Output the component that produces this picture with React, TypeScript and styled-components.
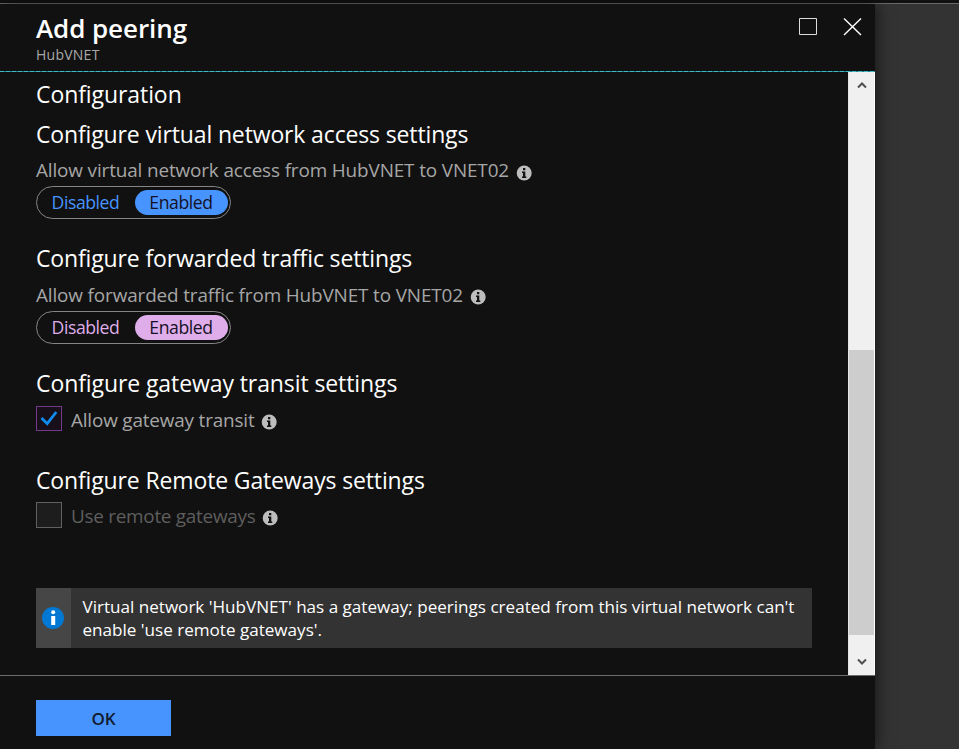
import React from 'react';
import styled, { createGlobalStyle } from 'styled-components';

const GlobalStyle = createGlobalStyle`
  *, *::before, *::after { box-sizing: border-box; }
  body { margin: 0; background: #333; font-family: 'Open Sans', 'Noto Sans', sans-serif; }
  h1, h2, p { margin: 0; font-weight: 400; }
  button { font-family: inherit; border: 0; padding: 0; background: none; }
`;

const Page = styled.div`
  display: flex;
  flex-direction: column;
  height: 749px;
  overflow: hidden;
  background: #333;
`;
const TopStrip = styled.div`
  flex: none;
  height: 4px;
  background: #111;
  border-bottom: 1px solid #6a6a6a;
`;
const Blade = styled.main`
  flex: 1;
  min-height: 0;
  width: 875px;
  display: flex;
  flex-direction: column;
  background: #111;
  color: #fff;
  box-shadow: 2px 0 14px rgba(0, 0, 0, 0.55);
`;
const Header = styled.header`
  flex: none;
  height: 67px;
  padding: 7px 13px 0 36px;
  display: flex;
  justify-content: space-between;
`;
const Title = styled.h1`
  font-size: 26px;
  font-weight: 600;
  line-height: 34px;
  letter-spacing: -0.08px;
`;
const Subtitle = styled.p`
  font-size: 14px;
  line-height: 20px;
  letter-spacing: 0.25px;
  color: #a9a9a9;
`;
const WindowButtons = styled.div`
  display: flex;
  align-items: flex-start;
  gap: 25px;
  padding-top: 6px;
`;
const IconButton = styled.button`
  display: flex;
  width: 20px;
  height: 20px;
`;
const Divider = styled.div`
  flex: none;
  height: 1px;
  background-color: #267f8c;
  background-image: repeating-linear-gradient(90deg, #3fb9c4 0, #3fb9c4 4px, #267f8c 4px, #267f8c 6px);
`;
const Body = styled.div`
  flex: none;
  height: 603px;
  display: flex;
`;
const Content = styled.div`
  width: 848px;
  padding: 4px 36px 0 36px;
`;
const Heading = styled.h2<{ $tracking?: number }>`
  font-size: 23px;
  line-height: 36px;
  letter-spacing: ${({ $tracking = -0.14 }) => $tracking}px;
  white-space: nowrap;
`;
const Section = styled.section<{ $height: number }>`
  height: ${({ $height }) => $height}px;
`;
const LabelRow = styled.div<{ $height?: number }>`
  display: flex;
  align-items: center;
  height: ${({ $height = 34 }) => $height}px;
`;
const Label = styled.span<{ $muted?: boolean; $tracking?: number; $drop?: number }>`
  font-size: 18.9px;
  line-height: 28px;
  padding-top: ${({ $drop = 2 }) => $drop}px;
  letter-spacing: ${({ $tracking = -0.13 }) => $tracking}px;
  color: ${({ $muted }) => ($muted ? '#5e5e5e' : '#a6a6a6')};
  white-space: nowrap;
`;
const InfoSvg = styled.svg`
  flex: none;
  margin: 7px 0 0 7px;
`;
const Switch = styled.div<{ $accent: string }>`
  width: 195px;
  height: 33px;
  padding: 3px 2px 3px 0;
  display: flex;
  border: 1px solid #858585;
  border-radius: 17px;
  color: ${({ $accent }) => $accent};
`;
const Option = styled.button<{ $fill?: string }>`
  height: 25px;
  width: ${({ $fill }) => ($fill ? '93px' : '98px')};
  padding-right: 1px;
  color: ${({ $fill }) => ($fill ? '#151126' : 'inherit')};
  background: ${({ $fill }) => $fill || 'transparent'};
  border-radius: 13px;
  font-size: 17.6px;
  line-height: 25px;
  letter-spacing: -0.42px;
`;
const Checkbox = styled.span<{ $checked?: boolean }>`
  flex: none;
  display: flex;
  width: 26px;
  height: ${({ $checked }) => ($checked ? 25 : 26)}px;
  margin-top: ${({ $checked }) => ($checked ? 1 : 0)}px;
  margin-right: 9px;
  border: 1px solid ${({ $checked }) => ($checked ? '#74398a' : '#606060')};
  background: ${({ $checked }) => ($checked ? '#17101b' : '#1d1d1d')};
`;
const Notice = styled.div`
  width: 776px;
  height: 60px;
  display: flex;
  background: #333;
`;
const NoticeIcon = styled.div`
  width: 35px;
  display: flex;
  align-items: center;
  padding-left: 5px;
  background: #464646;
`;
const NoticeText = styled.p`
  flex: 1;
  padding: 7px 0 0 11.5px;
  font-size: 17.1px;
  line-height: 23px;
  letter-spacing: -0.01px;
  white-space: nowrap;
`;
const Scrollbar = styled.div`
  width: 27px;
  display: flex;
  flex-direction: column;
  background: #f0f0f0;
  border-left: 1px solid #e4e4e4;
  border-right: 1px solid #fff;
`;
const ScrollArrow = styled.div<{ $height: number }>`
  height: ${({ $height }) => $height}px;
  display: flex;
  justify-content: center;
`;
const Thumb = styled.div`
  height: 285px;
  background: #cdcdcd;
`;
const Footer = styled.footer`
  flex: 1;
  border-top: 1px solid #6c6c6c;
  padding: 24px 36px;
`;
const OkButton = styled.button`
  display: block;
  width: 135px;
  height: 36px;
  background: #4894fe;
  color: #101a30;
  font-size: 17px;
  font-weight: 600;
  line-height: 37px;
`;

const Info = () => (
  <InfoSvg width="16" height="16" viewBox="0 0 16 16">
    <circle cx="8.2" cy="8" r="7.5" fill="#bdbdbd" />
    <path d="M7 3h2.3v2.2H7zM6 6.5h3.3v5h1V13H6v-1.5h1V8H6z" fill="#111" />
  </InfoSvg>
);

interface ToggleProps {
  accent: string;
}
const Toggle = ({ accent }: ToggleProps) => (
  <Switch $accent={accent}>
    <Option>Disabled</Option>
    <Option $fill={accent}>Enabled</Option>
  </Switch>
);

export default function App() {
  return (
    <Page>
      <GlobalStyle />
      <TopStrip />
      <Blade>
        <Header>
          <div>
            <Title>Add peering</Title>
            <Subtitle>HubVNET</Subtitle>
          </div>
          <WindowButtons>
            <IconButton aria-label="Maximize">
              <svg width="20" height="20" viewBox="0 0 20 20">
                <path d="M2.5 1.5h17v16h-17z" fill="none" stroke="#ddd" />
              </svg>
            </IconButton>
            <IconButton aria-label="Close">
              <svg width="20" height="20" viewBox="0 0 20 20">
                <path d="M2 1.5 19 18M19 1.5 2 18" fill="none" stroke="#fff" strokeWidth="1.4" />
              </svg>
            </IconButton>
          </WindowButtons>
        </Header>
        <Divider />
        <Body>
          <Content>
            <Section $height={40}>
              <Heading $tracking={-0.08}>Configuration</Heading>
            </Section>
            <Section $height={124}>
              <Heading>Configure virtual network access settings</Heading>
              <LabelRow>
                <Label>Allow virtual network access from HubVNET to VNET02</Label>
                <Info />
              </LabelRow>
              <Toggle accent="#4894fe" />
            </Section>
            <Section $height={125}>
              <Heading>Configure forwarded traffic settings</Heading>
              <LabelRow $height={35}>
                <Label>Allow forwarded traffic from HubVNET to VNET02</Label>
                <Info />
              </LabelRow>
              <Toggle accent="#dfaeea" />
            </Section>
            <Section $height={97}>
              <Heading $tracking={-0.09}>Configure gateway transit settings</Heading>
              <LabelRow>
                <Checkbox $checked>
                  <svg width="24" height="23" viewBox="0 0 24 23">
                    <path d="m4.5 11 5.7 5.7L19.3 5" fill="none" stroke="#118cf0" strokeWidth="2.8" />
                  </svg>
                </Checkbox>
                <Label $drop={4} $tracking={-0.17}>Allow gateway transit</Label>
                <Info />
              </LabelRow>
            </Section>
            <Section $height={126}>
              <Heading>Configure Remote Gateways settings</Heading>
              <LabelRow $height={33}>
                <Checkbox />
                <Label $muted $tracking={-0.26}>Use remote gateways</Label>
                <Info />
              </LabelRow>
            </Section>
            <Notice>
              <NoticeIcon>
                <svg width="24" height="24" viewBox="0 0 24 24">
                  <circle cx="12" cy="12" r="11" fill="#0078d4" />
                  <circle cx="12.2" cy="6.3" r="2" fill="#fff" />
                  <path d="M10.2 10h4v9h-4z" fill="#fff" />
                </svg>
              </NoticeIcon>
              <NoticeText>
                Virtual network 'HubVNET' has a gateway; peerings created from this virtual network can't
                <br />
                enable 'use remote gateways'.
              </NoticeText>
            </Notice>
          </Content>
          <Scrollbar>
            <ScrollArrow $height={278}>
              <svg width="12" height="28" viewBox="0 0 12 28">
                <path d="m2 15.5 4-4 4 4" fill="none" stroke="#505050" strokeWidth="2" />
              </svg>
            </ScrollArrow>
            <Thumb />
            <ScrollArrow $height={40}>
              <svg width="12" height="40" viewBox="0 0 12 40">
                <path d="m2 24.5 4 4 4-4" fill="none" stroke="#505050" strokeWidth="2" />
              </svg>
            </ScrollArrow>
          </Scrollbar>
        </Body>
        <Footer>
          <OkButton>OK</OkButton>
        </Footer>
      </Blade>
    </Page>
  );
}
